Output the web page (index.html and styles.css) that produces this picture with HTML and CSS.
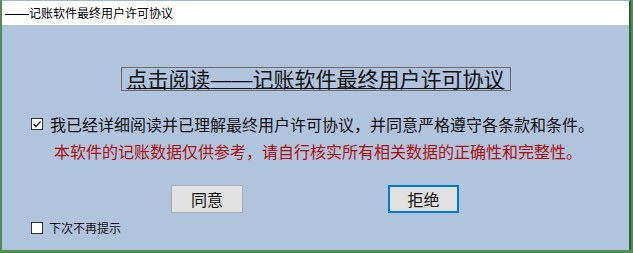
FILE: index.html
```html
<!DOCTYPE html>
<html lang="zh-CN">
<head>
<meta charset="utf-8">
<title>——记账软件最终用户许可协议</title>
<link rel="stylesheet" href="styles.css">
</head>
<body>
<div class="window">
  <div class="titlebar"><span class="dash">——</span>记账软件最终用户许可协议</div>
  <div class="content">
    <div class="link-row"><span class="link">点击阅读<span class="dash">——</span>记账软件最终用户许可协议</span></div>
    <div class="agree-row">
      <span class="checkbox">
        <svg width="10" height="10" viewBox="0 0 10 10"><path d="M1.5 5 L4 7.5 L8.5 2.5" fill="none" stroke="#222" stroke-width="1.3"/></svg>
      </span>
      <span class="agree-text">我已经详细阅读并已理解最终用户许可协议，并同意严格遵守各条款和条件。</span>
    </div>
    <div class="warning">本软件的记账数据仅供参考，请自行核实所有相关数据的正确性和完整性。</div>
    <div class="buttons">
      <button class="btn">同意</button>
      <button class="btn btn-focus">拒绝</button>
    </div>
    <div class="noshow-row">
      <span class="checkbox"></span>
      <span class="noshow-text">下次不再提示</span>
    </div>
  </div>
</div>
</body>
</html>
```
FILE: styles.css
```css
html, body {
  margin: 0;
  padding: 0;
}
body {
  width: 633px;
  height: 253px;
  background: #4f8c52;
  font-family: "Noto Sans CJK SC", "Noto Sans", sans-serif;
  overflow: hidden;
}
.window {
  margin-left: 2px;
  width: 629px;
  height: 250px;
  border-top: 1px solid #9ab7d6;
  border-right: 2px solid #2c6236;
  display: flex;
  flex-direction: column;
  box-sizing: border-box;
}
.titlebar {
  height: 24px;
  line-height: 24px;
  background: #ffffff;
  color: #000;
  font-size: 12px;
  padding-left: 3px;
  flex: none;
  white-space: nowrap;
}
.dash {
  font-family: "Liberation Sans", sans-serif;
}
.content {
  flex: 1;
  background: #b0c4de;
  display: flex;
  flex-direction: column;
  padding-top: 42px;
}
.link-row {
  display: flex;
  justify-content: center;
}
.link {
  border: 1px solid #6b6b6b;
  font-size: 21px;
  line-height: 21px;
  padding: 0 5px;
  text-decoration: underline;
  text-decoration-thickness: 1px;
  color: #111;
  white-space: nowrap;
}
.agree-row {
  margin-top: 23px;
  padding-left: 29px;
  display: flex;
  align-items: center;
  height: 20px;
}
.checkbox {
  width: 12px;
  height: 12px;
  box-sizing: border-box;
  border: 1px solid #333;
  background: #fff;
  display: inline-flex;
  align-items: center;
  justify-content: center;
  flex: none;
}
.agree-text {
  margin-left: 7px;
  font-size: 16px;
  line-height: 20px;
  color: #111;
  white-space: nowrap;
}
.warning {
  margin-top: 7px;
  padding-left: 52px;
  font-size: 16px;
  line-height: 20px;
  color: #b00d0d;
  white-space: nowrap;
}
.buttons {
  margin-top: 24px;
  padding-left: 169px;
  display: flex;
  gap: 145px;
}
.btn {
  width: 72px;
  height: 28px;
  box-sizing: border-box;
  background: #e1e1e1;
  border: 1px solid #adadad;
  font-family: "Noto Sans CJK SC", "Noto Sans", sans-serif;
  font-size: 16px;
  color: #111;
  padding: 0;
  margin: 0;
}
.btn-focus {
  width: 71px;
  border: 2px solid #0078d7;
}
.noshow-row {
  margin-top: 8px;
  padding-left: 29px;
  display: flex;
  align-items: center;
  height: 14px;
}
.noshow-text {
  margin-left: 6px;
  font-size: 12px;
  line-height: 14px;
  color: #111;
}
```
